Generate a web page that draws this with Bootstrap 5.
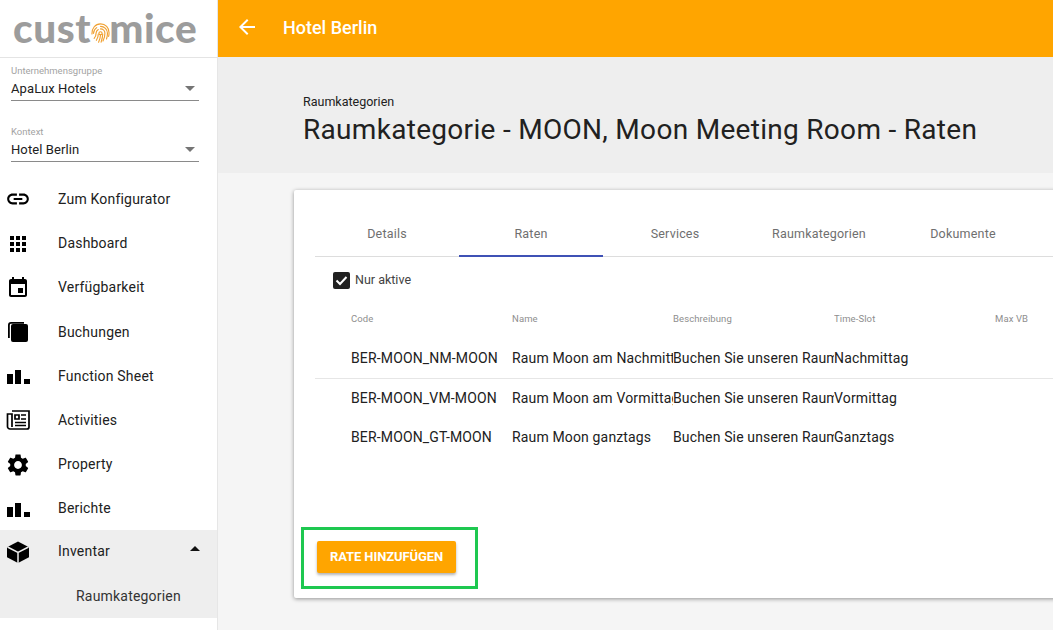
<!DOCTYPE html>
<html lang="de">
<head>
    <meta charset="UTF-8">
    <meta name="viewport" content="width=device-width, initial-scale=1.0">
    <title>Hotel Berlin</title>
    <link href="https://cdn.jsdelivr.net/npm/bootstrap@5.3.0/dist/css/bootstrap.min.css" rel="stylesheet">
    <style>
        html, body { height: 630px; overflow: hidden; }
        body { font-family: Roboto, "Liberation Sans", sans-serif; background: #f5f5f5; color: #212121; font-size: 14px; }

        /* Sidebar */
        .sidebar { width: 218px; height: 630px; background: #fff; border-right: 1px solid #e6e6e6; flex: none; }
        .logo { height: 58px; border-bottom: 1px solid #e4e4e4; padding-left: 13px; font-family: Lato, sans-serif; font-weight: 900; font-size: 40.500px; color: #9c9c9c; letter-spacing: .6px; line-height: 55px; white-space: nowrap; overflow: hidden; }
        .logo svg { width: 19px; height: 22px; margin: 0 -1px 0 0; vertical-align: -1px; }
        .selects { height: 119px; padding: 7px 18px 0 11px; }
        .pick { height: 61px; }
        .pick small { display: block; font-size: 9.500px; color: #a3a3a3; line-height: 12px; }
        .pick div { height: 24px; line-height: 22px; font-size: 13px; letter-spacing: .1px; border-bottom: 1px solid #8a8a8a; padding-right: 4px; width: 188px; }
        .caret { width: 0; height: 0; border-left: 5px solid transparent; border-right: 5px solid transparent; border-top: 5px solid #757575; }
        .side-nav { margin-top: .4px; }
        .side-link { height: 44.2px; padding-left: 6px; color: #212121; text-decoration: none; letter-spacing: .2px; }
        .side-link svg { width: 24px; height: 24px; margin-right: 28px; flex: none; }
        .side-link svg.big { width: 26px; height: 26px; margin: 0 27px 0 -1px; }
        .side-open { background: #eee; height: 88px; margin-top: -1px; }
        .side-open .side-link { padding-right: 17px; }
        .side-sub { padding-left: 76px; line-height: 44px; color: #333; letter-spacing: .2px; }
        .caret-up { width: 0; height: 0; border-left: 5px solid transparent; border-right: 5px solid transparent; border-bottom: 5px solid #111; margin-top: -6px; }

        /* Header */
        .topbar { height: 57px; background: #ffa500; color: #fff; font-size: 18px; font-weight: 500; padding: 0 0 3px 17px; }
        .topbar svg { width: 24px; height: 24px; margin-right: 24px; }
        .page-head { height: 116px; background: #eee; padding: 37px 0 0 85px; }
        .page-head small { display: block; font-size: 12.500px; line-height: 16px; color: #212121; }
        .page-head h1 { font-size: 28px; font-weight: 400; letter-spacing: .3px; line-height: 34px; margin: 3px 0 0; color: #212121; white-space: nowrap; }

        /* Card */
        .rate-card { position: relative; width: 790px; height: 408px; margin: 17px 0 0 76px; border: 0; border-radius: 2px; background: #fff; box-shadow: 0 1px 4px rgba(0,0,0,.4); padding: 23px 0 0 21px; }
        .tabs { width: 800px; height: 44px; border-bottom: 1px solid #ddd; flex-wrap: nowrap; }
        .tabs a { width: 144px; height: 44px; text-align: center; line-height: 41px; font-size: 12.500px; font-weight: 400; letter-spacing: .2px; color: #6f6f6f; text-decoration: none; flex: none; }
        .tabs a.active { border-bottom: 2px solid #3f51b5; }
        .only-active { margin: 13px 0 0 18px; height: 20px; font-size: 12.500px; color: #424242; }
        .check { width: 17px; height: 17px; background: #212121; border-radius: 2px; margin-right: 5px; }
        .check svg { width: 17px; height: 17px; display: block; }
        .rates { table-layout: fixed; width: 805px; margin: 9px 0 0; --bs-table-bg: transparent; }
        .rates th, .rates td { overflow: hidden; white-space: nowrap; padding: 0 0 0 36px; border: 0; vertical-align: middle; }
        .rates th + th, .rates td + td { padding-left: 0; }
        .rates th { width: 161px; height: 40px; font-size: 9.500px; font-weight: 400; letter-spacing: .1px; color: #8e8e8e; }
        .rates th:first-child { width: 197px; }
        .rates td { height: 39.500px; font-size: 14px; letter-spacing: .15px; color: #212121; }
        .rates tr.line td { border-bottom: 1px solid #e6e6e6; }
        .btn-rate { position: absolute; left: 23px; top: 351px; width: 139px; height: 32px; padding: 0; background: #ffa500; border: 0; border-radius: 2px; color: #fff; font-size: 13px; font-weight: 700; letter-spacing: -.1px; box-shadow: 0 2px 3px rgba(0,0,0,.3); }
        .btn-rate:hover { background: #ffa500; color: #fff; }
        .green-mark { position: absolute; left: 7px; top: 337px; width: 177px; height: 62px; border: 3px solid #1ec850; pointer-events: none; }
    </style>
</head>
<body class="d-flex">
<aside class="sidebar">
    <div class="logo">cust<svg viewBox="0 0 30 33" fill="none" stroke="#f0a030" stroke-width="1.800" stroke-linecap="round"><circle cx="15" cy="17" r="2.500"/><path d="M15 10a7 7 0 0 1 7 7c0 4-1 8-3 12M8 17a7 7 0 0 1 3.500-6M8 17c0 4-1 6-3 8M11.500 18c0 4-1 7-3 10M15 19c0 5-1 8-3 12M18.500 18c0 4-1 8-2.500 13"/><path d="M15 6a11 11 0 0 1 11 11c0 3-.5 6-1.500 9M4 17a11 11 0 0 1 5-9M1.500 18C1 9 7 2 15 2s13.500 6 13.500 14c0 2-.2 4-.7 6"/></svg>mice</div>
    <div class="selects">
        <div class="pick"><small>Unternehmensgruppe</small><div class="d-flex align-items-center justify-content-between">ApaLux Hotels<span class="caret"></span></div></div>
        <div class="pick"><small>Kontext</small><div class="d-flex align-items-center justify-content-between">Hotel Berlin<span class="caret"></span></div></div>
    </div>
    <nav class="nav side-nav flex-column flex-nowrap">
        <a class="side-link d-flex align-items-center" href="#"><svg class="big" viewBox="0 0 24 24"><path d="M3.900 12c0-1.710 1.390-3.100 3.100-3.100h4V7H7c-2.760 0-5 2.240-5 5s2.240 5 5 5h4v-1.900H7c-1.710 0-3.100-1.390-3.100-3.100zM8 13h8v-2H8v2zm9-6h-4v1.900h4c1.710 0 3.100 1.390 3.100 3.100s-1.390 3.100-3.100 3.100h-4V17h4c2.760 0 5-2.240 5-5s-2.240-5-5-5z"/></svg>Zum Konfigurator</a>
        <a class="side-link d-flex align-items-center" href="#"><svg viewBox="0 0 24 24"><path d="M4 8h4V4H4v4zm6 12h4v-4h-4v4zm-6 0h4v-4H4v4zm0-6h4v-4H4v4zm6 0h4v-4h-4v4zm6-10v4h4V4h-4zm-6 4h4V4h-4v4zm6 6h4v-4h-4v4zm0 6h4v-4h-4v4z"/></svg>Dashboard</a>
        <a class="side-link d-flex align-items-center" href="#"><svg viewBox="0 0 24 24"><path d="M17 12h-5v5h5v-5zM16 1v2H8V1H6v2H5c-1.110 0-1.990.9-1.990 2L3 19c0 1.100.89 2 2 2h14c1.100 0 2-.9 2-2V5c0-1.100-.9-2-2-2h-1V1h-2zm3 18H5V8h14v11z"/></svg>Verfügbarkeit</a>
        <a class="side-link d-flex align-items-center" href="#"><svg viewBox="0 0 24 24"><path d="M5 2h13v1.800H5A1.200 1.200 0 0 0 3.800 5v13H2V5a3 3 0 0 1 3-3z"/><rect x="5" y="4" width="17" height="18" rx="2"/></svg>Buchungen</a>
        <a class="side-link d-flex align-items-center" href="#"><svg viewBox="0 0 24 24"><path d="M1 10h6v10H1zM9 6h6v14H9zM18 15h6v5h-6z"/></svg>Function Sheet</a>
        <a class="side-link d-flex align-items-center" href="#"><svg viewBox="0 0 24 24" fill="none" stroke="#000" stroke-width="1.700"><path d="M6 3h17v16a2 2 0 0 1-2 2H4a2.500 2.500 0 0 1-2.500-2.500V6H6v13"/><path d="M9 7h4v4H9zM15 7h5M15 11h5M9 14.500h11M9 17.500h11"/></svg>Activities</a>
        <a class="side-link d-flex align-items-center" href="#"><svg class="big" viewBox="0 0 24 24"><path d="M19.140 12.940c.04-.3.06-.61.06-.94 0-.32-.02-.64-.07-.94l2.030-1.580c.18-.14.23-.41.12-.61l-1.920-3.320c-.12-.22-.37-.29-.59-.22l-2.390.96c-.5-.38-1.030-.7-1.620-.94l-.36-2.540c-.04-.24-.24-.41-.48-.41h-3.840c-.24 0-.43.17-.47.41l-.36 2.540c-.59.24-1.130.57-1.620.94l-2.390-.96c-.22-.08-.47 0-.59.22L2.740 8.870c-.12.21-.08.47.12.61l2.030 1.580c-.05.3-.09.63-.09.94s.02.64.07.94l-2.030 1.580c-.18.14-.23.41-.12.61l1.920 3.320c.12.22.37.29.59.22l2.390-.96c.5.38 1.030.7 1.620.94l.36 2.540c.05.24.24.41.48.41h3.840c.24 0 .44-.17.47-.41l.36-2.540c.59-.24 1.130-.56 1.620-.94l2.390.96c.22.08.47 0 .59-.22l1.920-3.320c.12-.22.07-.47-.12-.61l-2.010-1.580zM12 15.600c-1.980 0-3.600-1.620-3.600-3.600s1.620-3.600 3.600-3.600 3.600 1.620 3.600 3.600-1.620 3.600-3.600 3.600z"/></svg>Property</a>
        <a class="side-link d-flex align-items-center" href="#"><svg viewBox="0 0 24 24"><path d="M1 10h6v10H1zM9 6h6v14H9zM18 15h6v5h-6z"/></svg>Berichte</a>
        <div class="side-open">
            <a class="side-link d-flex align-items-center" href="#"><svg viewBox="0 0 24 24"><path d="M12 1.500 23 7.200v10L12 23 1 17.200v-10z"/><path d="M1.500 7 12 12.500 22.500 7M12 12.500V23" stroke="#eee" stroke-width="1.500" fill="none"/></svg>Inventar<span class="caret-up ms-auto"></span></a>
            <div class="side-sub">Raumkategorien</div>
        </div>
    </nav>
</aside>
<main class="flex-grow-1 overflow-hidden">
    <header class="topbar d-flex align-items-center">
        <svg viewBox="0 0 24 24" fill="#fff"><path d="M20 11H7.830l5.590-5.590L12 4l-8 8 8 8 1.410-1.410L7.830 13H20v-2z"/></svg>
        <span>Hotel Berlin</span>
    </header>
    <div class="page-head">
        <small>Raumkategorien</small>
        <h1>Raumkategorie - MOON, Moon Meeting Room - Raten</h1>
    </div>
    <section class="card rate-card">
        <div class="tabs nav">
            <a href="#">Details</a>
            <a href="#" class="active">Raten</a>
            <a href="#">Services</a>
            <a href="#">Raumkategorien</a>
            <a href="#">Dokumente</a>
        </div>
        <div class="only-active d-flex align-items-center">
            <span class="check"><svg viewBox="0 0 17 17" fill="none" stroke="#fff" stroke-width="2"><path d="M3.500 8.500 7 12l6.500-7"/></svg></span>
            Nur aktive
        </div>
        <table class="table rates">
            <thead>
                <tr><th>Code</th><th>Name</th><th>Beschreibung</th><th>Time-Slot</th><th>Max VB</th></tr>
            </thead>
            <tbody>
                <tr class="line"><td>BER-MOON_NM-MOON</td><td>Raum Moon am Nachmittag</td><td>Buchen Sie unseren Raum</td><td>Nachmittag</td><td></td></tr>
                <tr><td>BER-MOON_VM-MOON</td><td>Raum Moon am Vormittag</td><td>Buchen Sie unseren Raum</td><td>Vormittag</td><td></td></tr>
                <tr><td>BER-MOON_GT-MOON</td><td>Raum Moon ganztags</td><td>Buchen Sie unseren Raum</td><td>Ganztags</td><td></td></tr>
            </tbody>
        </table>
        <button class="btn btn-rate">RATE HINZUFÜGEN</button>
        <div class="green-mark"></div>
    </section>
</main>
</body>
</html>
